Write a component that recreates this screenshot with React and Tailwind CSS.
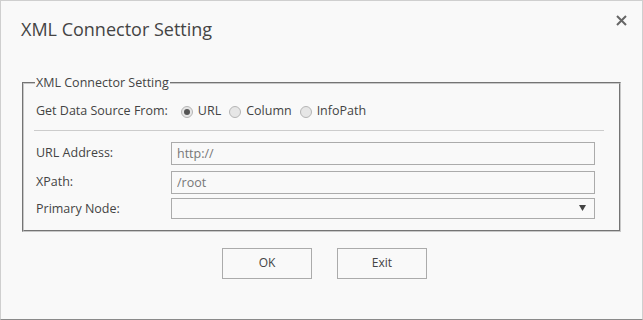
import { useState } from "react";

function Radio({ checked, label, onClick }) {
  return (
    <label className="flex items-center gap-[5px] cursor-pointer" onClick={onClick}>
      <span className="w-[12px] h-[12px] rounded-full border border-[#b5b5b5] bg-[#e6e6e6] flex items-center justify-center">
        {checked && <span className="w-[6px] h-[6px] rounded-full bg-[#555]"></span>}
      </span>
      <span>{label}</span>
    </label>
  );
}

function FieldRow({ label, children }) {
  return (
    <div className="flex items-center">
      <span className="w-[135px] shrink-0">{label}</span>
      {children}
    </div>
  );
}

export default function App() {
  const [source, setSource] = useState("URL");

  return (
    <div
      className="w-[643px] h-[320px] bg-[#f9f9f9] border border-[#cfcfcf] border-b-[#8a8a8a] text-[#444] relative"
      style={{ fontFamily: '"Open Sans", "Noto Sans", sans-serif' }}
    >
      <div className="pl-[20px] pt-[14px] text-[18px] leading-[28px] text-[#444]">XML Connector Setting</div>
      <button className="absolute right-[15px] top-[14px] text-[#666] cursor-pointer">
        <svg width="11" height="11" viewBox="0 0 11 11" stroke="currentColor" strokeWidth="2">
          <path d="M1 1 L10 10 M10 1 L1 10" />
        </svg>
      </button>

      <fieldset className="mx-[21px] mt-[31px] border-2 [border-style:groove] border-[#c8c8c8] px-[12px] pt-[8px] pb-[11px] text-[12.5px]">
        <legend className="px-[1px] ml-[-1px] text-[12.5px] text-[#444]">XML Connector Setting</legend>
        <div className="flex items-center h-[22px]">
          <span className="mr-[13px]">Get Data Source From:</span>
          <div className="flex items-center gap-[8px]">
            {["URL", "Column", "InfoPath"].map((s) => (
              <Radio key={s} label={s} checked={source === s} onClick={() => setSource(s)} />
            ))}
          </div>
        </div>
        <div className="border-t border-[#cccccc] mt-[7px] mb-[11px] ml-[-2px] mr-[3px]"></div>
        <div className="flex flex-col gap-[6px] pr-[12px]">
          <FieldRow label="URL Address:">
            <input
              className="flex-1 h-[23px] border border-[#ababab] bg-[#f9f9f9] px-[5px] text-[12.5px] placeholder-[#777] outline-none"
              placeholder="http://"
            />
          </FieldRow>
          <FieldRow label="XPath:">
            <input
              className="flex-1 h-[23px] border border-[#ababab] bg-[#f9f9f9] px-[5px] text-[12.5px] text-[#777] outline-none"
              defaultValue="/root"
            />
          </FieldRow>
          <FieldRow label="Primary Node:">
            <div className="flex-1 h-[21px] border border-[#ababab] bg-[#f9f9f9] flex items-center justify-end pr-[8px] mt-[-2px]">
              <svg width="7" height="6" viewBox="0 0 7 6" fill="#444">
                <path d="M0 0 H7 L3.5 6 Z" />
              </svg>
            </div>
          </FieldRow>
        </div>
      </fieldset>

      <div className="flex justify-center gap-[25px] mt-[16px] pl-[6px] text-[12px]">
        <button className="w-[90px] h-[31px] border border-[#ababab] bg-[#f9f9f9] text-[#444] cursor-pointer">OK</button>
        <button className="w-[90px] h-[31px] border border-[#ababab] bg-[#f9f9f9] text-[#444] cursor-pointer">Exit</button>
      </div>
    </div>
  );
}
